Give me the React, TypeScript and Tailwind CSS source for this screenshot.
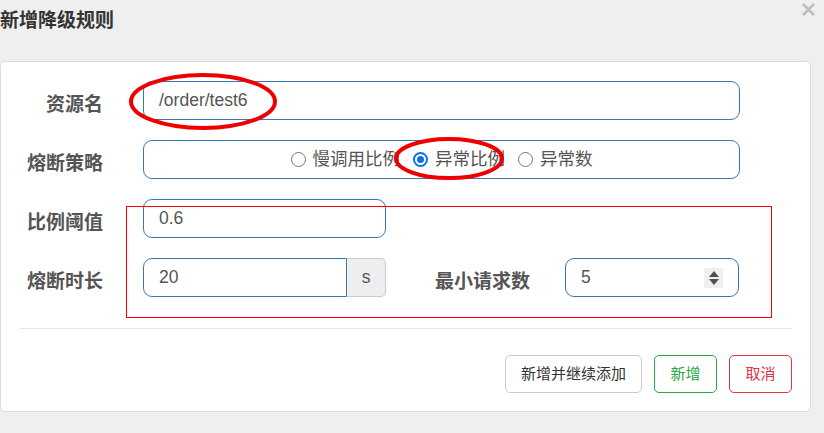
import React from 'react';

const font = { fontFamily: '"Liberation Sans", "Noto Sans CJK SC", sans-serif' };

function Radio({ checked, label }: { checked?: boolean; label: string }) {
  return (
    <div className="flex items-center">
      {checked ? (
        <div className="w-[15px] h-[15px] rounded-full border-[2px] border-[#0b6ff0] flex items-center justify-center">
          <div className="w-[7px] h-[7px] rounded-full bg-[#0b6ff0]" />
        </div>
      ) : (
        <div className="w-[15px] h-[15px] rounded-full border border-[#767676] bg-white" />
      )}
      <span className="ml-[7px] text-[17.5px] text-[#555]">{label}</span>
    </div>
  );
}

function Label({ children, className = '' }: { children: React.ReactNode; className?: string }) {
  return <div className={`pt-[9px] text-[19px] font-bold text-[#555] ${className}`}>{children}</div>;
}

export default function App() {
  return (
    <div className="relative w-[824px] h-[433px] bg-[#efefef] overflow-hidden" style={font}>
      {/* Header */}
      <div className="flex h-[61px]">
        <div className="mt-[6px] text-[19px] leading-[30px] font-bold text-[#333]">新增降级规则</div>
        <svg className="ml-auto mr-[9px] mt-[3px]" width="13" height="13" viewBox="0 0 13 13">
          <path d="M1 1L12 12M12 1L1 12" stroke="#bdbdbd" strokeWidth="2.6" />
        </svg>
      </div>

      {/* Card */}
      <div className="w-[811px] bg-white border border-[#dcdcdc] rounded-[5px] pt-[19px] pb-[18px]">
        <div className="flex flex-col gap-[20px]">
          <div className="flex items-center h-[39px]">
            <Label className="w-[102px] text-right">资源名</Label>
            <div className="ml-[40px] w-[597px] h-[39px] border border-[#3a77b5] rounded-[9px] flex items-center pl-[15px] text-[17.5px] text-[#555]">
              /order/test6
            </div>
          </div>

          <div className="flex items-center h-[39px]">
            <Label className="w-[102px] text-right">熔断策略</Label>
            <div className="ml-[40px] w-[597px] h-[39px] border border-[#3a77b5] rounded-[9px] flex items-center justify-center gap-[13px]">
              <Radio label="慢调用比例" />
              <Radio checked label="异常比例" />
              <Radio label="异常数" />
            </div>
          </div>

          <div className="flex items-center h-[39px]">
            <Label className="w-[102px] text-right">比例阈值</Label>
            <div className="ml-[40px] w-[243px] h-[39px] border border-[#3a77b5] rounded-[9px] flex items-center pl-[15px] text-[17.5px] text-[#555]">
              0.6
            </div>
          </div>

          <div className="flex items-center h-[39px]">
            <Label className="w-[102px] text-right">熔断时长</Label>
            <div className="ml-[40px] flex h-[39px]">
              <div className="w-[204px] h-[39px] border border-[#3a77b5] rounded-l-[9px] flex items-center pl-[15px] text-[17.5px] text-[#555]">
                20
              </div>
              <div className="w-[39px] h-[39px] bg-[#eeeeee] border border-l-0 border-[#cccccc] rounded-r-[5px] flex items-center justify-center text-[17.5px] text-[#555]">
                s
              </div>
            </div>
            <Label className="ml-[49px]">最小请求数</Label>
            <div className="ml-[35px] w-[174px] h-[39px] border border-[#3a77b5] rounded-[9px] flex items-center pl-[15px] pr-[15px] text-[17.5px] text-[#555]">
              <span>5</span>
              <div className="ml-auto w-[19px] h-[20px] bg-[#f0f0f0] flex flex-col items-center justify-center gap-[2px]">
                <svg width="10" height="6" viewBox="0 0 10 6"><path d="M5 0L10 6H0Z" fill="#505050" /></svg>
                <svg width="10" height="6" viewBox="0 0 10 6"><path d="M0 0H10L5 6Z" fill="#505050" /></svg>
              </div>
            </div>
          </div>
        </div>

        <div className="mt-[31px] mx-[19px] border-t border-[#e5e5e5]" />

        <div className="flex justify-end gap-[12px] pr-[18px] pt-[26px]">
          <button className="w-[137px] h-[38px] border border-[#cccccc] rounded-[5px] bg-white text-[15px] text-[#333]">
            新增并继续添加
          </button>
          <button className="w-[63px] h-[38px] border border-[#28a745] rounded-[5px] bg-white text-[15px] text-[#28a745]">
            新增
          </button>
          <button className="w-[63px] h-[38px] border border-[#dc3545] rounded-[5px] bg-white text-[15px] text-[#dc3545]">
            取消
          </button>
        </div>
      </div>

      {/* Red annotations */}
      <svg className="absolute inset-0 pointer-events-none" width="824" height="433">
        <ellipse cx="203" cy="101.5" rx="72" ry="26.5" fill="none" stroke="#ee0000" strokeWidth="4" />
        <ellipse cx="449" cy="158.5" rx="53" ry="19.5" fill="none" stroke="#ee0000" strokeWidth="4" />
      </svg>
      <div className="absolute left-[126px] top-[206px] w-[646px] h-[112px] border-[1.5px] border-[#ff0000] pointer-events-none" />
    </div>
  );
}
